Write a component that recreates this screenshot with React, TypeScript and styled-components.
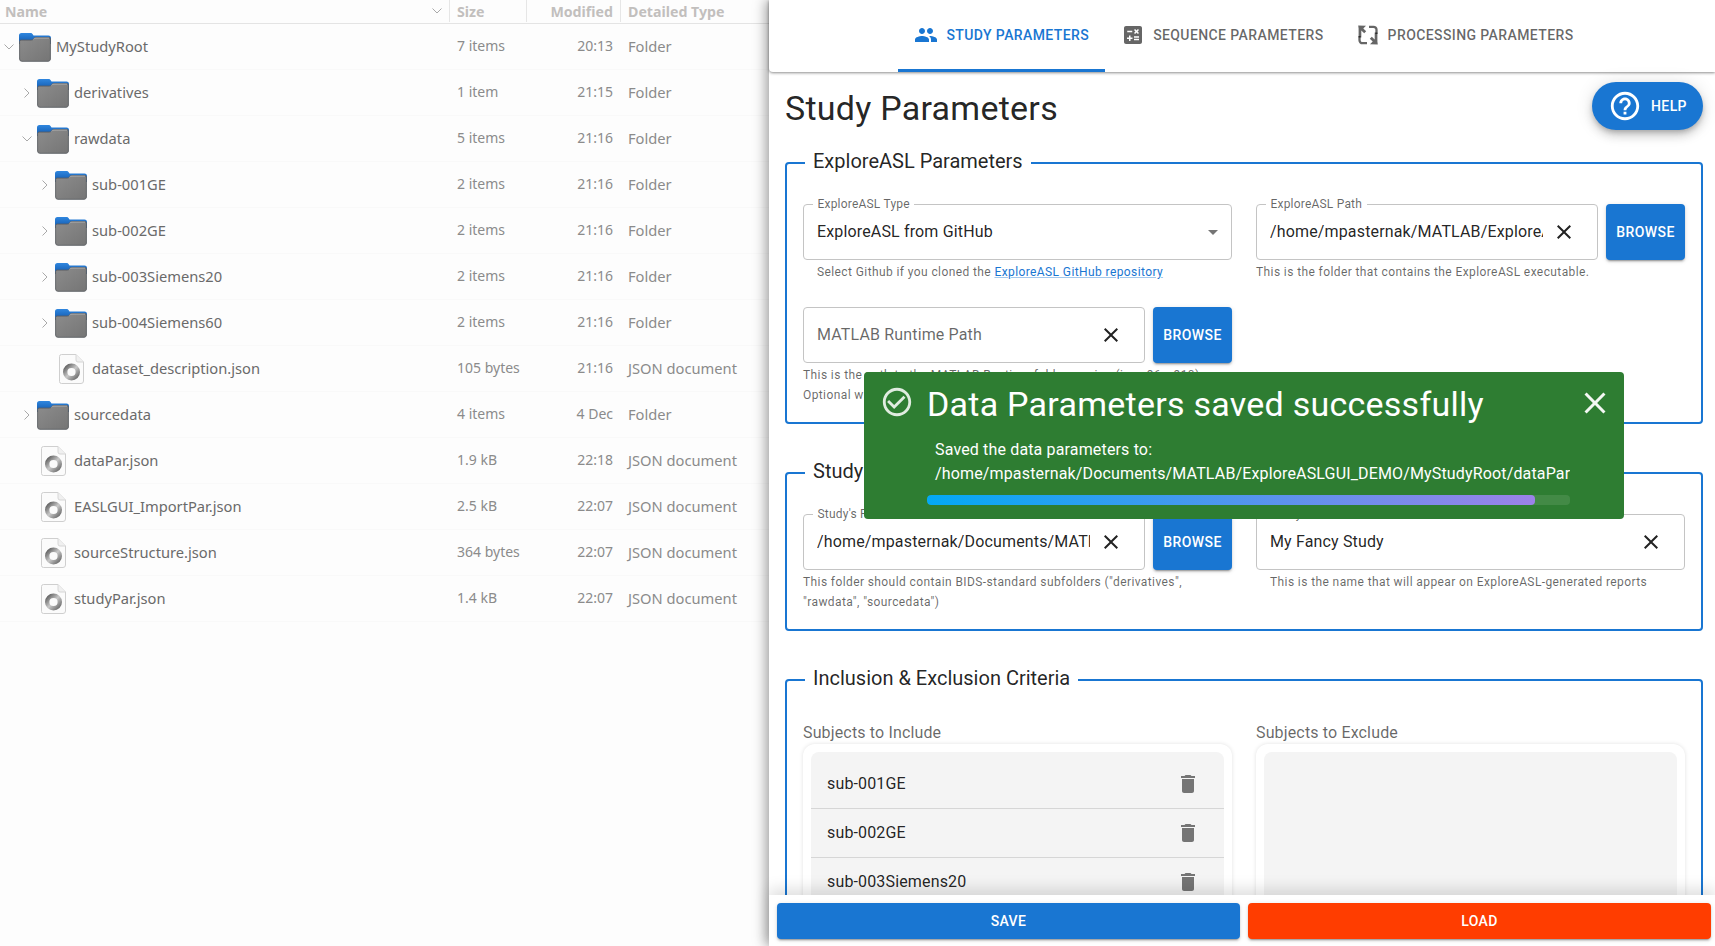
import React from "react";
import styled, { createGlobalStyle } from "styled-components";

const Global = createGlobalStyle`
  html, body { margin: 0; padding: 0; height: 946px; overflow: hidden; background: #fdfdfd; }
  #root { height: 946px; }
  * { box-sizing: border-box; }
`;

const roboto = `Roboto, "Liberation Sans", sans-serif`;
const ubuntu = `"Noto Sans", "Open Sans", sans-serif`;

const Shell = styled.div`
  display: flex;
  height: 946px;
  width: 1715px;
  overflow: hidden;
`;

/* ---------- file manager ---------- */
const Files = styled.section`
  width: 769px;
  flex: none;
  background: #fdfdfd;
  font-family: ${ubuntu};
  font-size: 14.7px;
`;
const Columns = styled.div`
  display: grid;
  grid-template-columns: 449px 77px 94px 1fr;
  height: 24px;
  padding-bottom: 1px;
  border-bottom: 1px solid #e4e4e4;
`;
const ColumnHead = styled.div<{ $right?: boolean; $first?: boolean }>`
  display: flex;
  align-items: center;
  justify-content: ${(p) => (p.$right ? "flex-end" : p.$first ? "space-between" : "flex-start")};
  padding: ${(p) => (p.$first ? "0 6px 0 5px" : p.$right ? "0 7px 0 0" : "0 0 0 7px")};
  font-weight: 700;
  font-size: 14.2px;
  color: #c2bfbd;
  border-left: ${(p) => (p.$first ? "none" : "1px solid #e6e6e6")};
`;
const Row = styled.div`
  display: grid;
  grid-template-columns: 449px 77px 94px 1fr;
  height: 46px;
  align-items: center;
  border-bottom: 1px solid #f9f9f9;
`;
const NameCell = styled.div<{ $level: number }>`
  display: flex;
  align-items: center;
  padding-left: ${(p) => p.$level * 18}px;
  color: #6a6a6a;
`;
const ChevronBox = styled.span`
  width: 19px;
  flex: none;
  display: flex;
  justify-content: center;
  padding-right: 1px;
`;
const IconBox = styled.span`
  width: 32px;
  height: 30px;
  flex: none;
  display: flex;
  align-items: center;
  justify-content: center;
`;
const FileName = styled.span`
  margin-left: 5px;
  padding-bottom: 2px;
`;
const SizeCell = styled.div`
  padding: 0 0 2px 8px;
  font-size: 14px;
  color: #8b8b8b;
`;
const TimeCell = styled.div`
  padding: 0 7px 2px 0;
  text-align: right;
  font-size: 14px;
  color: #8b8b8b;
`;
const TypeCell = styled.div`
  padding: 0 0 2px 8px;
  color: #8b8b8b;
`;

const Chevron = ({ open }: { open?: boolean }) => (
  <svg width="12" height="12" viewBox="0 0 12 12" fill="none" stroke="#a9a9a9" strokeWidth="1">
    {open ? <path d="M1.5 3.5 6 8l4.5-4.5" /> : <path d="M3.5 1.5 8 6l-4.5 4.5" />}
  </svg>
);

const FolderIcon = () => (
  <svg width="32" height="30" viewBox="0 0 32 30">
    <defs>
      <linearGradient id="fb" x1="0" y1="0" x2="0" y2="1">
        <stop offset="0" stopColor="#2f86df" />
        <stop offset="1" stopColor="#0f55a8" />
      </linearGradient>
      <linearGradient id="fg" x1="0" y1="0" x2="1" y2="1">
        <stop offset="0" stopColor="#8c8c8c" />
        <stop offset="1" stopColor="#757575" />
      </linearGradient>
    </defs>
    <path d="M2.5 1h9c1 0 1.6.5 2.2 1.3l.8 1.2H29.5A2.5 2.5 0 0 1 32 6v6H0V3.500A2.500 2.500 0 0 1 2.500 1z" fill="url(#fb)" />
    <path d="M.6 27V9.500c0-.8.6-1.400 1.400-1.400h10c1.200 0 1.800-.4 2.500-1.200.7-.8 1.300-1.300 2.500-1.300H30c.8 0 1.400.6 1.400 1.400V27c0 1.300-1 2.300-2.300 2.300H2.900A2.300 2.300 0 0 1 .6 27z" fill="url(#fg)" stroke="#5b5f63" strokeWidth=".9" />
    <path d="M14.500 7.300c.7-.8 1.300-1.200 2.500-1.200h13" fill="none" stroke="#b9b9b9" strokeWidth=".8" />
  </svg>
);

const DocIcon = () => (
  <svg width="25" height="30" viewBox="0 0 25 30">
    <defs>
      <linearGradient id="ring" x1="0" y1="0" x2="1" y2="1">
        <stop offset="0" stopColor="#5c5c5c" />
        <stop offset=".5" stopColor="#c9c9c9" />
        <stop offset="1" stopColor="#6a6a6a" />
      </linearGradient>
    </defs>
    <path d="M2.500.5H17L24.500 8v19a2.500 2.500 0 0 1-2.500 2.500H2.500A2 2 0 0 1 .5 27.500V2.500a2 2 0 0 1 2-2z" fill="#fbfbfb" stroke="#cfcfcf" />
    <path d="M17 .5V6a2 2 0 0 0 2 2h5.500" fill="#f0f0f0" stroke="#d6d6d6" />
    <circle cx="12.500" cy="18" r="6.300" fill="none" stroke="url(#ring)" strokeWidth="4.400" />
  </svg>
);

type Item = { n: string; l: number; s: string; t: string; k: "open" | "closed" | "file" };
const items: Item[] = [
  { n: "MyStudyRoot", l: 0, s: "7 items", t: "20:13", k: "open" },
  { n: "derivatives", l: 1, s: "1 item", t: "21:15", k: "closed" },
  { n: "rawdata", l: 1, s: "5 items", t: "21:16", k: "open" },
  { n: "sub-001GE", l: 2, s: "2 items", t: "21:16", k: "closed" },
  { n: "sub-002GE", l: 2, s: "2 items", t: "21:16", k: "closed" },
  { n: "sub-003Siemens20", l: 2, s: "2 items", t: "21:16", k: "closed" },
  { n: "sub-004Siemens60", l: 2, s: "2 items", t: "21:16", k: "closed" },
  { n: "dataset_description.json", l: 2, s: "105 bytes", t: "21:16", k: "file" },
  { n: "sourcedata", l: 1, s: "4 items", t: "4 Dec", k: "closed" },
  { n: "dataPar.json", l: 1, s: "1.9 kB", t: "22:18", k: "file" },
  { n: "EASLGUI_ImportPar.json", l: 1, s: "2.5 kB", t: "22:07", k: "file" },
  { n: "sourceStructure.json", l: 1, s: "364 bytes", t: "22:07", k: "file" },
  { n: "studyPar.json", l: 1, s: "1.4 kB", t: "22:07", k: "file" },
];

/* ---------- right panel ---------- */
const Panel = styled.main`
  position: relative;
  flex: 1;
  min-width: 0;
  display: flex;
  flex-direction: column;
  background: #fff;
  font-family: ${roboto};
  color: rgba(0, 0, 0, 0.87);
  box-shadow: -3px 0 12px rgba(0, 0, 0, 0.38);
  z-index: 1;
`;
const TabBar = styled.nav`
  flex: none;
  height: 72px;
  display: flex;
  justify-content: center;
  padding-left: 4px;
  background: #fff;
  border-bottom-left-radius: 4px;
  box-shadow: 0 1px 3px rgba(0, 0, 0, 0.45);
  position: relative;
  z-index: 2;
`;
const Tab = styled.div<{ $active?: boolean }>`
  display: flex;
  align-items: center;
  gap: 8px;
  padding: 0 16px;
  font-size: 14px;
  font-weight: 500;
  letter-spacing: 0.4px;
  text-transform: uppercase;
  color: ${(p) => (p.$active ? "#1976d2" : "rgba(0,0,0,0.6)")};
  border-bottom: 3px solid ${(p) => (p.$active ? "#1976d2" : "transparent")};
  svg { fill: currentColor; width: 24px; height: 24px; flex: none; }
`;
const Scroll = styled.div`
  flex: 1;
  min-height: 0;
  overflow: hidden;
  padding: 15px 12px 0 16px;
`;
const Title = styled.h1`
  margin: 0 0 16px;
  font-size: 34px;
  font-weight: 400;
  line-height: 42px;
  letter-spacing: 0.25px;
`;
const Group = styled.fieldset`
  margin: 0 0 31px;
  padding: 23px 16px 0;
  border: 2px solid #1976d2;
  border-radius: 4px;
  min-width: 0;
`;
const GroupTitle = styled.legend`
  margin-left: 2px;
  padding: 0 8px 4px;
  font-size: 20px;
  line-height: 32px;
`;
const GroupEnd = styled.div`
  height: 17px;
`;
const Grid = styled.div`
  display: grid;
  grid-template-columns: 429px 429px;
  column-gap: 24px;
  row-gap: 25px;
`;
const Column = styled.div``;
const FieldRow = styled.div`
  display: flex;
  gap: 8px;
`;
const Outline = styled.div`
  position: relative;
  flex: 1;
  min-width: 0;
  height: 56px;
  display: flex;
  align-items: center;
  padding: 0 14px 1px 13px;
  border: 1px solid #c4c4c4;
  border-radius: 4px;
  background: #fff;
`;
const FloatLabel = styled.span`
  position: absolute;
  top: -8px;
  left: 9px;
  padding: 0 4.5px;
  font-size: 12px;
  line-height: 15px;
  letter-spacing: 0.2px;
  color: rgba(0, 0, 0, 0.6);
  background: #fff;
`;
const Value = styled.input`
  flex: 1;
  min-width: 0;
  border: 0;
  outline: 0;
  padding: 0;
  background: transparent;
  font: 400 16px ${roboto};
  letter-spacing: 0.15px;
  color: rgba(0, 0, 0, 0.87);
  &::placeholder { color: rgba(0, 0, 0, 0.6); opacity: 1; }
`;
const ClearIcon = styled.svg`
  width: 24px;
  height: 24px;
  margin: 1px 7px 0 9px;
  flex: none;
  fill: #222;
`;
const Caret = styled.svg`
  width: 24px;
  height: 24px;
  margin-right: -8px;
  flex: none;
  fill: rgba(0, 0, 0, 0.54);
`;
const Browse = styled.button`
  flex: none;
  width: 79px;
  height: 56px;
  border: 0;
  border-radius: 4px;
  background: #1976d2;
  color: #fff;
  font: 500 14px ${roboto};
  letter-spacing: 0.4px;
  box-shadow: 0 3px 1px -2px rgba(0,0,0,.2), 0 2px 2px 0 rgba(0,0,0,.14), 0 1px 5px 0 rgba(0,0,0,.12);
`;
const Helper = styled.p<{ $inset?: boolean; $tight?: boolean }>`
  margin: ${(p) => (p.$tight ? "0" : "2px 0 0")};
  padding-left: ${(p) => (p.$inset ? "14px" : "0")};
  font-size: 12px;
  line-height: 20px;
  letter-spacing: 0.4px;
  color: rgba(0, 0, 0, 0.6);
`;
const Link = styled.a`
  color: #1976d2;
  text-decoration: underline;
  text-decoration-color: rgba(25, 118, 210, 0.4);
`;
const ListLabel = styled.div`
  font-size: 16px;
  line-height: 24px;
  letter-spacing: 0.15px;
  color: rgba(0, 0, 0, 0.6);
  margin-bottom: -1px;
`;
const ListCard = styled.div`
  padding: 8px;
  height: 330px;
  border-radius: 12px;
  background: #fff;
  box-shadow: 0 0 4px rgba(0, 0, 0, 0.12);
`;
const ListInner = styled.div`
  height: 100%;
  padding-top: 8px;
  border-radius: 8px;
  background: #f4f4f4;
`;
const ListRow = styled.div`
  height: 49px;
  padding: 0 16px 2px;
  display: flex;
  align-items: center;
  justify-content: space-between;
  font-size: 16px;
  letter-spacing: 0.15px;
  border-bottom: 1px solid #d6d6d6;
  svg { fill: #757575; width: 24px; height: 24px; margin: 2px 8px 0 0; }
`;
const Footer = styled.footer`
  flex: none;
  height: 51px;
  display: grid;
  grid-template-columns: 463px 463px;
  column-gap: 8px;
  padding: 8px 0 0 8px;
  background: #fff;
  box-shadow: 0 -6px 14px rgba(0, 0, 0, 0.13);
  position: relative;
`;
const Action = styled.button<{ $tone: string }>`
  height: 36px;
  border: 0;
  border-radius: 4px;
  background: ${(p) => p.$tone};
  color: #fff;
  font: 500 14px ${roboto};
  letter-spacing: 0.4px;
  box-shadow: 0 3px 1px -2px rgba(0,0,0,.2), 0 2px 2px 0 rgba(0,0,0,.14), 0 1px 5px 0 rgba(0,0,0,.12);
`;
const HelpFab = styled.div`
  position: absolute;
  top: 82px;
  right: 12px;
  z-index: 3;
  width: 111px;
  height: 48px;
  display: flex;
  align-items: center;
  gap: 9px;
  padding-left: 16px;
  border-radius: 24px;
  background: #1976d2;
  color: #fff;
  font-size: 14px;
  font-weight: 500;
  letter-spacing: 0.4px;
  box-shadow: 0 3px 5px -1px rgba(0,0,0,.2), 0 6px 10px 0 rgba(0,0,0,.14), 0 1px 18px 0 rgba(0,0,0,.12);
  svg { width: 34px; height: 34px; fill: #fff; flex: none; }
`;
const Toast = styled.aside`
  position: absolute;
  top: 372px;
  left: 95px;
  z-index: 4;
  width: 760px;
  height: 147px;
  display: flex;
  align-items: flex-start;
  padding: 10px 14px 0 16px;
  border-radius: 4px;
  background: #2e7d32;
  color: #fff;
`;
const ToastIcon = styled.svg`
  width: 34px;
  height: 34px;
  margin: 3px 13px 0 0;
  flex: none;
  fill: rgba(255, 255, 255, 0.85);
`;
const ToastBody = styled.div`
  width: 643px;
  flex: none;
`;
const ToastTitle = styled.div`
  margin: 2px 0 14px;
  font-size: 34px;
  line-height: 40px;
  letter-spacing: 0.25px;
`;
const ToastLine = styled.div`
  padding-left: 8px;
  font-size: 16px;
  line-height: 24px;
  letter-spacing: 0.15px;
  white-space: nowrap;
  overflow: hidden;
`;
const Track = styled.div`
  margin-top: 9px;
  height: 10px;
  border-radius: 4px;
  background: rgba(255, 255, 255, 0.1);
  overflow: hidden;
`;
const Fill = styled.div`
  height: 100%;
  border-radius: 4px;
  background: linear-gradient(90deg, #03a9f4, #9c82e8);
`;
const ToastClose = styled.svg`
  width: 36px;
  height: 36px;
  margin: 3px 0 0 7px;
  flex: none;
  fill: rgba(255, 255, 255, 0.95);
`;

const X = () => (
  <ClearIcon viewBox="0 0 24 24"><path d="M19 6.41 17.59 5 12 10.59 6.41 5 5 6.41 10.59 12 5 17.59 6.41 19 12 13.41 17.59 19 19 17.59 13.41 12z" /></ClearIcon>
);
const Trash = () => (
  <svg viewBox="0 0 24 24"><path d="M6 19c0 1.1.9 2 2 2h8c1.100 0 2-.9 2-2V7H6v12zM19 4h-3.500l-1-1h-5l-1 1H5v2h14V4z" /></svg>
);

export default function App() {
  const progress = 94.6;
  return (
    <Shell>
      <Global />
      <Files>
        <Columns>
          <ColumnHead $first>Name <Chevron open /></ColumnHead>
          <ColumnHead>Size</ColumnHead>
          <ColumnHead $right>Modified</ColumnHead>
          <ColumnHead>Detailed Type</ColumnHead>
        </Columns>
        {items.map((it) => (
          <Row key={it.n}>
            <NameCell $level={it.l}>
              <ChevronBox>{it.k !== "file" && <Chevron open={it.k === "open"} />}</ChevronBox>
              <IconBox>{it.k === "file" ? <DocIcon /> : <FolderIcon />}</IconBox>
              <FileName>{it.n}</FileName>
            </NameCell>
            <SizeCell>{it.s}</SizeCell>
            <TimeCell>{it.t}</TimeCell>
            <TypeCell>{it.k === "file" ? "JSON document" : "Folder"}</TypeCell>
          </Row>
        ))}
      </Files>
      <Panel>
        <TabBar>
          <Tab $active>
            <svg viewBox="0 0 24 24"><path d="M16 11c1.660 0 2.990-1.340 2.990-3S17.660 5 16 5c-1.660 0-3 1.340-3 3s1.340 3 3 3zm-8 0c1.660 0 2.990-1.340 2.990-3S9.660 5 8 5C6.340 5 5 6.340 5 8s1.340 3 3 3zm0 2c-2.330 0-7 1.170-7 3.500V19h14v-2.500c0-2.330-4.670-3.500-7-3.500zm8 0c-.29 0-.62.02-.97.05 1.160.84 1.970 1.970 1.970 3.450V19h6v-2.500c0-2.330-4.670-3.500-7-3.500z" /></svg>
            Study Parameters
          </Tab>
          <Tab>
            <svg viewBox="0 0 24 24"><path d="M19 3H5c-1.100 0-2 .9-2 2v14c0 1.100.9 2 2 2h14c1.100 0 2-.9 2-2V5c0-1.100-.9-2-2-2zm-5.970 4.060L14.090 6l1.410 1.410L16.910 6l1.060 1.060-1.410 1.410 1.410 1.410-1.060 1.060-1.410-1.400-1.410 1.410-1.060-1.060 1.410-1.410-1.410-1.420zm-6.780.66h5v1.500h-5v-1.500zM11.500 16h-2v2H8v-2H6v-1.500h2v-2h1.500v2h2V16zm6.500 1.250h-5v-1.500h5v1.500zm0-2.500h-5v-1.500h5v1.500z" /></svg>
            Sequence Parameters
          </Tab>
          <Tab>
            <svg viewBox="0 0 24 24">
              <path d="M13 3.800h4.500a3 3 0 0 1 3 3V11" fill="none" stroke="currentColor" strokeWidth="2.300" />
              <path d="M11 20.200H6.500a3 3 0 0 1-3-3V13" fill="none" stroke="currentColor" strokeWidth="2.300" />
              <path d="M2.600 9.800V5.600l-.4-3.200 7.800.4L7.300 5.400l2.900 2.900-2 2-2.900-2.900V14.500H2.600z" />
              <path d="M21.400 14.200v4.200l.4 3.200-7.800-.4 2.700-2.600-2.900-2.900 2-2 2.900 2.900V9.500h2.700z" />
            </svg>
            Processing Parameters
          </Tab>
        </TabBar>
        <Scroll>
          <Title>Study Parameters</Title>
          <Group>
            <GroupTitle>ExploreASL Parameters</GroupTitle>
            <Grid>
              <Column>
                <Outline>
                  <FloatLabel>ExploreASL Type</FloatLabel>
                  <Value readOnly value="ExploreASL from GitHub" />
                  <Caret viewBox="0 0 24 24"><path d="M7 10l5 5 5-5z" /></Caret>
                </Outline>
                <Helper $inset>Select Github if you cloned the <Link href="#">ExploreASL GitHub repository</Link></Helper>
              </Column>
              <Column>
                <FieldRow>
                  <Outline>
                    <FloatLabel>ExploreASL Path</FloatLabel>
                    <Value readOnly value="/home/mpasternak/MATLAB/ExploreASL" />
                    <X />
                  </Outline>
                  <Browse>BROWSE</Browse>
                </FieldRow>
                <Helper>This is the folder that contains the ExploreASL executable.</Helper>
              </Column>
              <Column>
                <FieldRow>
                  <Outline>
                    <Value readOnly placeholder="MATLAB Runtime Path" />
                    <X />
                  </Outline>
                  <Browse>BROWSE</Browse>
                </FieldRow>
                <Helper>This is the path to the MATLAB Runtime folder version (i.e. v96, v910).</Helper>
                <Helper $tight>Optional when using ExploreASL from GitHub.</Helper>
              </Column>
            </Grid>
            <GroupEnd />
          </Group>
          <Group>
            <GroupTitle>Study Definitions</GroupTitle>
            <Grid>
              <Column>
                <FieldRow>
                  <Outline>
                    <FloatLabel>Study's Root Path</FloatLabel>
                    <Value readOnly value="/home/mpasternak/Documents/MATLAB/ExploreASLGUI_DEMO/MyStudyRoot" />
                    <X />
                  </Outline>
                  <Browse>BROWSE</Browse>
                </FieldRow>
                <Helper>This folder should contain BIDS-standard subfolders ("derivatives", "rawdata", "sourcedata")</Helper>
              </Column>
              <Column>
                <Outline>
                  <FloatLabel>Study Name</FloatLabel>
                  <Value readOnly value="My Fancy Study" />
                  <X />
                </Outline>
                <Helper $inset>This is the name that will appear on ExploreASL-generated reports</Helper>
              </Column>
            </Grid>
            <GroupEnd />
          </Group>
          <Group>
            <GroupTitle>Inclusion &amp; Exclusion Criteria</GroupTitle>
            <Grid>
              <Column>
                <ListLabel>Subjects to Include</ListLabel>
                <ListCard>
                  <ListInner>
                    {["sub-001GE", "sub-002GE", "sub-003Siemens20", "sub-004Siemens60"].map((s) => (
                      <ListRow key={s}>{s}<Trash /></ListRow>
                    ))}
                  </ListInner>
                </ListCard>
              </Column>
              <Column>
                <ListLabel>Subjects to Exclude</ListLabel>
                <ListCard><ListInner /></ListCard>
              </Column>
            </Grid>
          </Group>
        </Scroll>
        <Footer>
          <Action $tone="#1976d2">SAVE</Action>
          <Action $tone="#ff3d00">LOAD</Action>
        </Footer>
        <HelpFab>
          <svg viewBox="0 0 24 24"><path d="M11 18h2v-2h-2v2zm1-16C6.480 2 2 6.480 2 12s4.480 10 10 10 10-4.480 10-10S17.520 2 12 2zm0 18c-4.410 0-8-3.590-8-8s3.590-8 8-8 8 3.590 8 8-3.590 8-8 8zm0-14c-2.210 0-4 1.790-4 4h2c0-1.100.9-2 2-2s2 .9 2 2c0 2-3 1.750-3 5h2c0-2.250 3-2.500 3-5 0-2.210-1.790-4-4-4z" /></svg>
          HELP
        </HelpFab>
        <Toast>
          <ToastIcon viewBox="0 0 24 24"><path d="M16.590 7.580 10 14.170l-3.590-3.580L5 12l5 5 8-8zM12 2C6.480 2 2 6.480 2 12s4.480 10 10 10 10-4.480 10-10S17.520 2 12 2zm0 18c-4.420 0-8-3.580-8-8s3.580-8 8-8 8 3.580 8 8-3.580 8-8 8z" /></ToastIcon>
          <ToastBody>
            <ToastTitle>Data Parameters saved successfully</ToastTitle>
            <ToastLine>Saved the data parameters to:</ToastLine>
            <ToastLine>/home/mpasternak/Documents/MATLAB/ExploreASLGUI_DEMO/MyStudyRoot/dataPar.json</ToastLine>
            <Track><Fill style={{ width: `${progress}%` }} /></Track>
          </ToastBody>
          <ToastClose viewBox="0 0 24 24"><path d="M19 6.41 17.59 5 12 10.59 6.41 5 5 6.41 10.59 12 5 17.59 6.41 19 12 13.41 17.59 19 19 17.59 13.41 12z" /></ToastClose>
        </Toast>
      </Panel>
    </Shell>
  );
}
